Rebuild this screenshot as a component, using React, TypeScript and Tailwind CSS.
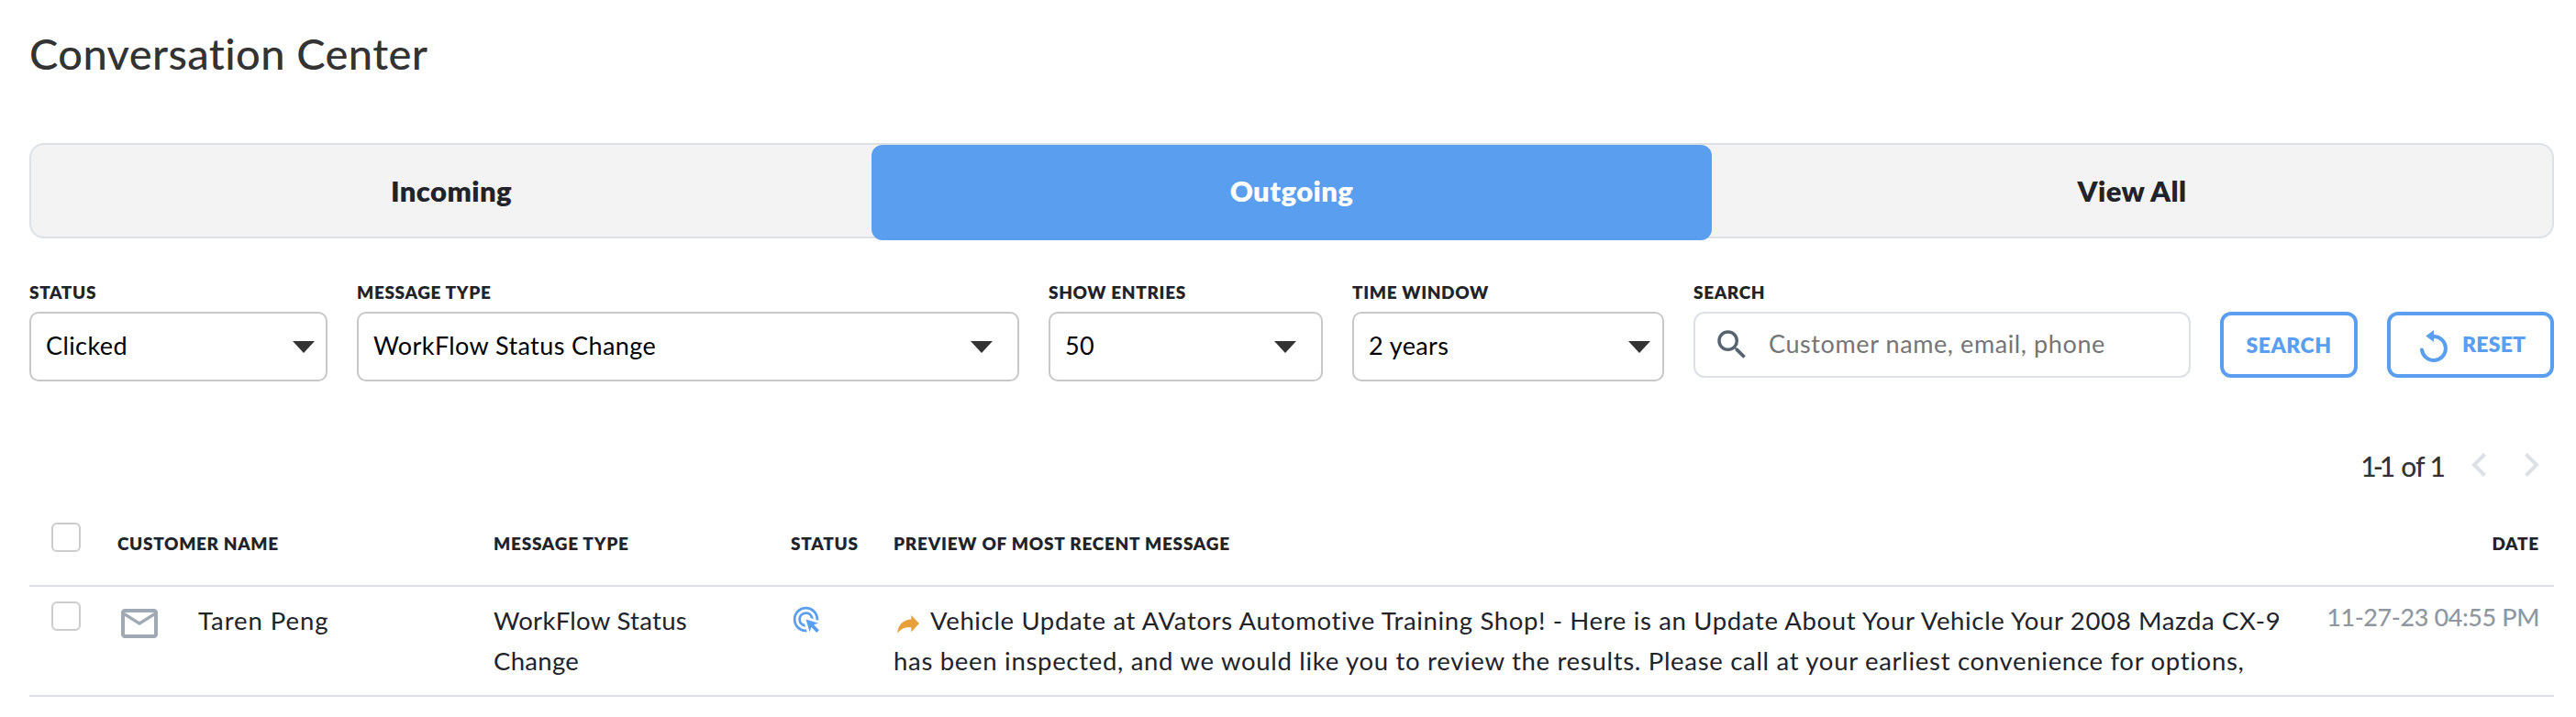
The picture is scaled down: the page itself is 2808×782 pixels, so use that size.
import { useState, type ReactNode } from 'react'
import { MdAdsClick, MdMailOutline, MdSearch } from 'react-icons/md'

interface Message {
  id: number
  customer: string
  type: string
  preview: string[]
  date: string
}

const TABS = ['Incoming', 'Outgoing', 'View All'] as const

const MESSAGES: Message[] = [
  {
    id: 1,
    customer: 'Taren Peng',
    type: 'WorkFlow Status Change',
    preview: [
      'Vehicle Update at AVators Automotive Training Shop! - Here is an Update About Your Vehicle Your 2008 Mazda CX-9',
      'has been inspected, and we would like you to review the results. Please call at your earliest convenience for options,',
    ],
    date: '11-27-23 04:55 PM',
  },
]

const ROW_GRID = 'grid grid-cols-[96px_410px_324px_112px_1fr_auto] items-start border-b-2 border-[#dde1e5] pr-4'

export default function App() {
  const [tab, setTab] = useState<(typeof TABS)[number]>('Outgoing')
  const [query, setQuery] = useState('')

  return (
    <div className="min-h-[782px] bg-white px-8 pr-6 pt-7 font-['Lato',sans-serif] text-[#212329] [font-variant-ligatures:none]">
      <h1 className="h-32 text-[47px] leading-[60px] font-medium tracking-[0.4px] text-[#333]">
        Conversation Center
      </h1>

      <div className="grid h-[104px] grid-cols-3 rounded-[16px] border-2 border-[#dde1e5] bg-[#f3f3f3]">
        {TABS.map((t) => (
          <button
            key={t}
            onClick={() => setTab(t)}
            className={`flex h-[104px] items-start justify-center rounded-[12px] text-[31px] leading-[100px] font-extrabold tracking-[0.4px] ${
              t === tab ? 'bg-[#5a9ef0] text-white' : ''
            }`}
          >
            {t}
          </button>
        ))}
      </div>

      <div className="mt-[49px] flex h-[107px] items-start gap-8">
        <Field label="STATUS">
          <Select value="Clicked" className="w-[325px] pr-3" />
        </Field>
        <Field label="MESSAGE TYPE">
          <Select value="WorkFlow Status Change" className="w-[722px] pr-[27px]" />
        </Field>
        <Field label="SHOW ENTRIES">
          <Select value="50" className="w-[299px] pr-[27px]" />
        </Field>
        <Field label="TIME WINDOW">
          <Select value="2 years" className="w-[340px] pr-[13px]" />
        </Field>
        <Field label="SEARCH">
          <div className="flex h-[72px] w-[542px] items-center rounded-[12px] border-2 border-[#dde1e5] pl-[19px]">
            <MdSearch className="size-[42px] shrink-0 text-[#56646f]" />
            <input
              value={query}
              onChange={(e) => setQuery(e.target.value)}
              placeholder="Customer name, email, phone"
              className="ml-[19px] w-[440px] pb-px text-[27px] tracking-[0.6px] outline-none placeholder:text-[#757575]"
            />
          </div>
        </Field>
        <button className="mt-[31px] h-[72px] w-[150px] rounded-[12px] border-4 border-[#5a9ef0] text-[23px] font-extrabold tracking-[0.5px] text-[#5a9ef0]">
          SEARCH
        </button>
        <button className="mt-[31px] flex h-[72px] w-[182px] items-center rounded-[12px] border-4 border-[#5a9ef0] pl-8 text-[23px] font-extrabold tracking-[0.2px] text-[#5a9ef0]">
          <ResetIcon />
          <span className="ml-4 pb-[2px]">RESET</span>
        </button>
      </div>

      <div className="mt-[71px] flex h-10 items-center justify-end pr-4 text-[#333]">
        <span className="mr-[29px] pt-px text-[30px] leading-10 font-medium tracking-[-1px]">
          <span className="tracking-[-4px]">1-1</span>
          <span className="ml-2.5">of 1</span>
        </span>
        <Chevron d="M14.5 1.5 3 13l11.5 11.5" />
        <Chevron d="M1.5 1.5 13 13 1.5 24.5" className="ml-[42px]" />
      </div>

      <div className={`${ROW_GRID} h-[113px] pt-[56px] text-[19px] leading-5 font-extrabold tracking-[0.75px]`}>
        <Checkbox className="-mt-[13px]" />
        <span className="tracking-[0.65px]">CUSTOMER NAME</span>
        <span>MESSAGE TYPE</span>
        <span>STATUS</span>
        <span>PREVIEW OF MOST RECENT MESSAGE</span>
        <span>DATE</span>
      </div>

      {MESSAGES.map((m) => (
        <div
          key={m.id}
          className={`${ROW_GRID} h-[120px] pt-[15px] text-[27.5px] leading-[44px] tracking-[0.65px]`}
        >
          <Checkbox className="mt-px" />
          <div className="flex items-start">
            <MdMailOutline className="mt-px size-12 text-[#a0aab4]" />
            <span className="ml-10 tracking-[0.95px]">{m.customer}</span>
          </div>
          <span className="w-[240px] tracking-[0.3px]">{m.type}</span>
          <MdAdsClick className="mt-1 size-[33px] text-[#5a9ef0]" />
          <div className="whitespace-nowrap">
            <p className="flex">
              <ForwardArrow />
              {m.preview[0]}
            </p>
            <p className="tracking-[0.7px]">{m.preview[1]}</p>
          </div>
          <span className="-mt-1 text-[27px] font-medium tracking-[-0.4px] text-[#8f98a1]">{m.date}</span>
        </div>
      ))}
    </div>
  )
}

function Field({ label, children }: { label: string; children: ReactNode }) {
  return (
    <div>
      <p className="mb-[11px] text-[19px] leading-5 font-extrabold tracking-[0.65px]">{label}</p>
      {children}
    </div>
  )
}

function Select({ value, className }: { value: string; className: string }) {
  return (
    <button
      className={`flex h-[76px] items-center justify-between rounded-[10px] border-2 border-[#c8c8c8] pl-4 text-[27px] tracking-[0.4px] text-black ${className}`}
    >
      <span className="pb-px">{value}</span>
      <svg width="24" height="13" viewBox="0 0 24 13" fill="#333">
        <path d="M0 0h24L12 13z" />
      </svg>
    </button>
  )
}

function Checkbox({ className }: { className: string }) {
  return (
    <input
      type="checkbox"
      className={`ml-6 size-8 appearance-none rounded-[6px] border-2 border-[#ccc] bg-white ${className}`}
    />
  )
}

function Chevron({ d, className }: { d: string; className?: string }) {
  return (
    <svg width="16" height="26" viewBox="0 0 16 26" fill="none" stroke="#dde1e5" strokeWidth="4" className={className}>
      <path d={d} />
    </svg>
  )
}

function ResetIcon() {
  return (
    <svg width="30" height="36" viewBox="0 0 30 36" className="mt-1 shrink-0">
      <path d="M2 21.5A13 13 0 1 0 15 7" fill="none" stroke="#5a9ef0" strokeWidth="4" strokeLinecap="round" />
      <path d="M6.3 6.5 15 0v13z" fill="#5a9ef0" />
    </svg>
  )
}

function ForwardArrow() {
  return (
    <svg width="24" height="20" viewBox="0 0 24 20" fill="#e8a03d" className="mt-4 mr-[12px] ml-[4px] shrink-0">
      <path d="M15.3 0 24 9l-8.7 9.3v-5C9 12.8 4 14.5.2 20 .6 10 7 4.8 15.3 4.4z" />
    </svg>
  )
}
